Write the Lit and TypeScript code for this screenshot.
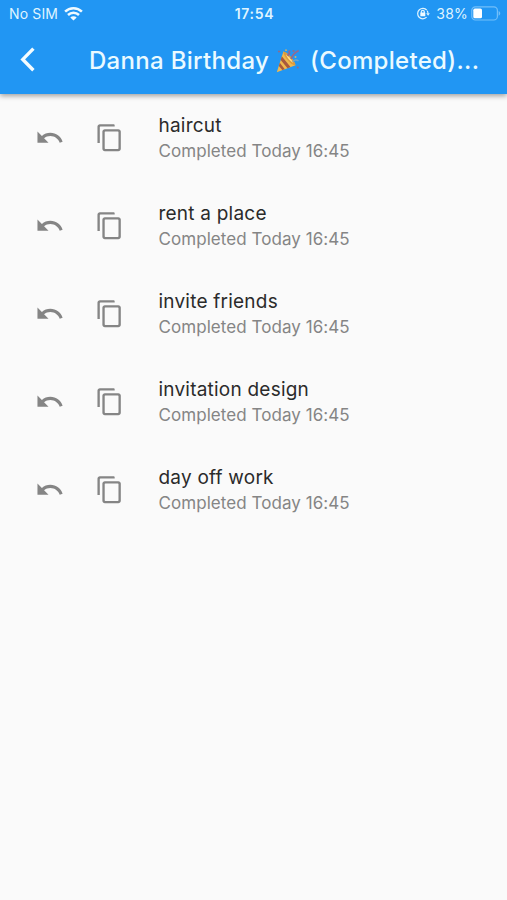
import { LitElement, html, css } from "lit";
import { customElement, property } from "lit/decorators.js";

@customElement("status-bar")
class StatusBar extends LitElement {
  static styles = css`
    :host { display: flex; height: 27px; align-items: center; color: #dff4ff; font-size: 14px; }
    .side { flex: 1; display: flex; align-items: center; }
    .left { padding-left: 9px; gap: 6px; }
    .right { justify-content: flex-end; padding-right: 6px; }
    .carrier { letter-spacing: 0.15px; }
    .time { font-weight: 600; letter-spacing: 0.7px; margin-right: 1px; }
    .pct { margin-left: 6px; margin-right: 3px; letter-spacing: 0.2px; }
    svg { display: block; }
  `;
  render() {
    return html`
      <div class="side left">
        <span class="carrier">No SIM</span>
        <svg width="19" height="14" viewBox="0 0 19 14">
          <g fill="none" stroke="#effaff" stroke-width="2.5">
            <path d="M1.1 4.7a12 12 0 0 1 16.8 0" />
            <path d="M4 8a7.9 7.9 0 0 1 11 0" />
          </g>
          <path d="M9.5 13.6 6.3 10.5a4.6 4.6 0 0 1 6.4 0z" fill="#effaff" />
        </svg>
      </div>
      <span class="time">17:54</span>
      <div class="side right">
        <svg width="14" height="13" viewBox="0 0 14 13">
          <g fill="none" stroke="#dff4ff" stroke-width="1.2">
            <path d="M10.8 3.2A5.2 5.2 0 1 0 10.6 10.2M11.2 3.8A5.2 5.2 0 0 1 12 6.5" />
            <path d="M5.3 6V4.8a1.5 1.5 0 0 1 3 0V6" />
          </g>
          <rect x="4.3" y="5.5" width="5" height="3.8" rx=".5" fill="#effaff" />
          <path d="M10.2 6.2h3.6l-1.7 2.5z" fill="#dff4ff" />
        </svg>
        <span class="pct">38%</span>
        <svg width="30" height="15" viewBox="0 0 30 15">
          <rect x=".8" y=".8" width="25.6" height="13.2" rx="3.6" fill="none" stroke="#72bffa" stroke-width="1.2" />
          <rect x="2.3" y="2.6" width="8.7" height="9.7" rx="1.6" fill="#fff" />
          <path d="M27.6 5.1c2.2.8 2.2 3.9 0 4.7z" fill="#72bffa" />
        </svg>
      </div>
    `;
  }
}

@customElement("task-row")
class TaskRow extends LitElement {
  @property() name = "";
  @property() when = "";
  static styles = css`
    :host { display: flex; height: 88px; align-items: center; padding-left: 34.6px; box-sizing: border-box; }
    svg { display: block; flex: none; width: 29.5px; height: 29.5px; fill: #858585; }
    .copy { margin-left: 30.5px; }
    .text { margin-left: 34.4px; white-space: nowrap; }
    .name { font-size: 19px; line-height: 26px; color: #2b2b2b; letter-spacing: 0.22px; }
    .when { font-size: 17px; line-height: 24px; color: #858585; letter-spacing: 0.06px; }
  `;
  render() {
    return html`
      <svg viewBox="0 0 24 24"><path d="M12.5 8c-2.65 0-5.05.99-6.9 2.6L2 7v9h9l-3.62-3.62c1.39-1.16 3.16-1.88 5.12-1.88 3.54 0 6.55 2.31 7.6 5.5l2.37-.78C21.08 11.03 17.15 8 12.5 8z" /></svg>
      <svg class="copy" viewBox="0 0 24 24"><path d="M15.2 1H4c-1.1 0-2 .9-2 2v13.2h1.9V3.4q0-.5.5-.5H16V1.8q0-.8-.8-.8zM19 5H8c-1.1 0-2 .9-2 2v14c0 1.1.9 2 2 2h11c1.1 0 2-.9 2-2V7c0-1.1-.9-2-2-2zm-.4 16.1H8.4q-.5 0-.5-.5V7.4q0-.5.5-.5h10.2q.5 0 .5.5v13.2q0 .5-.5.5z" fill-rule="evenodd" /></svg>
      <div class="text">
        <div class="name">${this.name}</div>
        <div class="when">${this.when}</div>
      </div>
    `;
  }
}

@customElement("app-root")
class AppRoot extends LitElement {
  static styles = css`
    :host { display: block; height: 900px; overflow: hidden; background: #fafafa; font-family: Inter, "Liberation Sans", sans-serif; }
    header { height: 93.5px; background: #2196f3; box-shadow: 0 2px 5px rgba(0, 0, 0, 0.36); }
    .bar { display: flex; height: 66px; align-items: center; padding-left: 20px; }
    svg { display: block; flex: none; }
    h1 { margin: 0 0 0 54px; padding-top: 1px; display: flex; align-items: center; font-size: 24px; font-weight: 550; line-height: 32px; color: #eafaff; white-space: nowrap; letter-spacing: 0.3px; }
    .party { margin: 0 9px 0 6px; }
  `;
  private tasks = ["haircut", "rent a place", "invite friends", "invitation design", "day off work"];
  render() {
    return html`
      <header>
        <status-bar></status-bar>
        <div class="bar">
          <svg width="15" height="26" viewBox="0 0 15 26"><path d="M13.4 1.6 2.8 12.4 13.4 23.2" fill="none" stroke="#f3fcff" stroke-width="3.4" /></svg>
          <h1>
            <span>Danna Birthday</span>
            <svg class="party" width="26" height="26" viewBox="0 0 26 26">
              <path d="M8.4 3.5 1.8 24.3 20.5 17.2Q17 8 8.4 3.5z" fill="#efb84e" />
              <path d="M6.8 8.2 15.5 19l-3 1.2L5.7 12zM4.8 14.8l5 6.4-2.5.9-3.4-4.2z" fill="#a8593f" />
              <path d="M8.4 3.5c3-.6 12.2 9.4 12.1 13.7-3.8 1.1-12.8-9.8-12.1-13.7z" fill="#dc9b3d" />
              <path d="M11 6.5c2.5 1.5 5.7 5 7.2 8.2-2.4-.8-6.3-4.9-7.2-8.2z" fill="#ffe08a" />
              <path d="M12.5 7.8q2.7-2.1 1.7-5.4M16.2 11q1-5 7.5-8.5" fill="none" stroke="#946a8e" stroke-width="1.8" />
              <path d="M17.5 13.5q3-2.5 6-.6" fill="none" stroke="#6fa6cb" stroke-width="1.5" />
              <g fill="#8d6c8c"><circle cx="4" cy="3.5" r="1.1" /><circle cx="18.5" cy="3" r="1.1" /><circle cx="22.8" cy="19.5" r="1" /></g>
              <g fill="#d3b16b"><circle cx="20.5" cy="9" r="1" /><circle cx="11" cy="2.2" r=".9" /></g>
            </svg>
            <span>(Completed)...</span>
          </h1>
        </div>
      </header>
      <main>
        ${this.tasks.map((t) => html`<task-row .name=${t} .when=${"Completed Today 16:45"}></task-row>`)}
      </main>
    `;
  }
}
